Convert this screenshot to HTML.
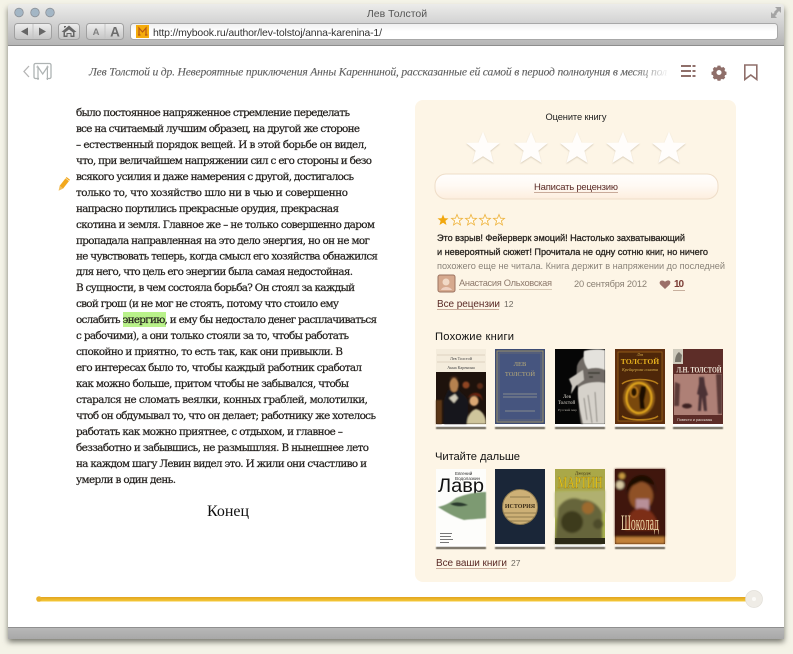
<!DOCTYPE html>
<html lang="ru"><head><meta charset="utf-8"><title>Лев Толстой</title>
<style>
html,body{margin:0;padding:0;background:#f4f3e7;width:793px;height:654px;overflow:hidden}
svg{display:block}
.s{font-family:"Liberation Sans","DejaVu Sans",sans-serif}
.r{font-family:"Liberation Serif","DejaVu Serif",serif}
.b text{font-family:"DejaVu Serif","Liberation Serif",serif;font-size:10.400px;fill:#23201d;stroke:#23201d;stroke-width:.2}
</style></head><body>
<svg xmlns="http://www.w3.org/2000/svg" width="793" height="654" viewBox="0 0 793 654">
<defs>
<linearGradient id="tb" x1="0" y1="0" x2="0" y2="1"><stop offset="0" stop-color="#ececea"/><stop offset=".5" stop-color="#d0d0d0"/><stop offset="1" stop-color="#b4b4b4"/></linearGradient>
<linearGradient id="bb" x1="0" y1="0" x2="0" y2="1"><stop offset="0" stop-color="#b9b9b9"/><stop offset="1" stop-color="#a8a8a8"/></linearGradient>
<linearGradient id="btn" x1="0" y1="0" x2="0" y2="1"><stop offset="0" stop-color="#eeeeee"/><stop offset="1" stop-color="#c4c4c4"/></linearGradient>
<linearGradient id="url" x1="0" y1="0" x2="0" y2="1"><stop offset="0" stop-color="#efefef"/><stop offset=".5" stop-color="#fff"/></linearGradient>
<linearGradient id="wb" x1="0" y1="0" x2="0" y2="1"><stop offset="0" stop-color="#fffefd"/><stop offset=".45" stop-color="#fffaf4"/><stop offset="1" stop-color="#fdeede"/></linearGradient>
<linearGradient id="sl" x1="0" y1="0" x2="0" y2="1"><stop offset="0" stop-color="#e2a31f"/><stop offset="1" stop-color="#f5cb3a"/></linearGradient>
<linearGradient id="fade" x1="0" y1="0" x2="1" y2="0"><stop offset="0" stop-color="#fff" stop-opacity="0"/><stop offset="1" stop-color="#fff"/></linearGradient>
<filter id="sh" x="-5%" y="-5%" width="110%" height="110%"><feGaussianBlur stdDeviation="3"/></filter>
<filter id="bl" x="-10%" y="-10%" width="120%" height="120%"><feGaussianBlur stdDeviation=".5"/></filter>
<filter id="bl2" x="-20%" y="-20%" width="140%" height="140%"><feGaussianBlur stdDeviation="1"/></filter>
<filter id="ss" x="-30%" y="-30%" width="160%" height="160%"><feGaussianBlur stdDeviation=".8"/></filter>
<path id="star" d="M0-16.500 4.600-5.400 17-5.100 7.400 2.700 10.600 15 0 8.200-10.600 15-7.400 2.700-17-5.100-4.600-5.400Z"/>
<path id="st2" d="M0-5.500 1.500-1.800 5.500-1.600 2.400 .9 3.500 5 0 2.700-3.500 5-2.400 .9-5.500-1.600-1.500-1.800Z"/>
</defs>

<!-- window -->
<rect x="8" y="8" width="776" height="634" fill="#77776e" filter="url(#sh)"/>
<rect x="8" y="4" width="776" height="42" rx="3" fill="url(#tb)"/>
<rect x="8" y="45" width="776" height="1" fill="#8d8d8d"/>
<rect x="8" y="46" width="776" height="581" fill="#fff"/>
<rect x="8" y="627" width="776" height="12" fill="url(#bb)"/>
<rect x="8" y="627" width="776" height="1" fill="#8f8f8f"/>

<!-- traffic lights -->
<g stroke="#8c9198" stroke-width=".8"><circle cx="19" cy="12.500" r="4.300" fill="#a3b6c5"/><circle cx="35" cy="12.500" r="4.300" fill="#a3b6c5"/><circle cx="50" cy="12.500" r="4.300" fill="#a3b6c5"/></g>
<text class="s" x="397" y="17" font-size="10.500" fill="#555" text-anchor="middle">Лев Толстой</text>
<!-- resize -->
<g fill="#a4a4a4"><path d="M775 7h6v6l-2-2-3 3-2-2 3-3Z"/><path d="M771 18v-6l2 2 2-2 2 2-2 2 2 2Z"/></g>

<!-- buttons -->
<g stroke="#a0a0a0" fill="url(#btn)"><rect x="14.500" y="23.500" width="37" height="16" rx="3"/><rect x="58.500" y="23.500" width="21" height="16" rx="3"/><rect x="86.500" y="23.500" width="37" height="16" rx="3"/></g>
<path d="M33 24v15M105 24v15" stroke="#c4c4c4"/>
<path d="M21 31.500l7-4v8ZM46 31.500l-7-4v8Z" fill="#666"/>
<path d="M69 25.500l-7.500 6.500h2v5h4v-3h3v3h4v-5h2ZM64 28v-2h2v1Z" fill="#666"/><path d="M65 32.500v3h1.500v-2.500h5v2.500H73v-3l-4-3Z" fill="#ddd"/>
<text class="s" x="96" y="35" font-size="9.500" font-weight="bold" fill="#808080" text-anchor="middle">A</text>
<text class="s" x="115" y="36.500" font-size="13.500" font-weight="bold" fill="#6c6c6c" text-anchor="middle">A</text>
<!-- url -->
<rect x="130.500" y="23.500" width="647" height="16" rx="3" fill="url(#url)" stroke="#a8a8a8"/>
<rect x="136" y="25" width="13" height="13" fill="#f5ac0b"/>
<path d="M139 35v-7l3.500 4 3.500-4v7M138 35h2.500M145 35h2.500" stroke="#b85a14" stroke-width="1.200" fill="none"/>
<text class="s" x="153" y="36" font-size="10.500" fill="#333" textLength="229" lengthAdjust="spacing">http://mybook.ru/author/lev-tolstoj/anna-karenina-1/</text>

<!-- header row -->
<path d="M29 66l-5 5.500 5 5.500" fill="none" stroke="#b5b5b5" stroke-width="1.300"/>
<path d="M39 78.500h-3.500a1.500 1.500 0 0 1-1.500-1.500V65a1.500 1.500 0 0 1 1.500-1.500h14a1.500 1.500 0 0 1 1.500 1.500v12a1.500 1.500 0 0 1-1.500 1.500H46.500" fill="none" stroke="#aeb3b3" stroke-width="1.300"/>
<path d="M38 80v-13l4.700 7 4.700-7v13M36.500 67h2M46.500 67h2" fill="none" stroke="#aeb3b3" stroke-width="1.200"/>
<text class="r" x="89" y="75.500" font-size="11.600" font-style="italic" fill="#5f5f5f" stroke="#5f5f5f" stroke-width=".12" textLength="578" lengthAdjust="spacing">Лев Толстой и др. Невероятные приключения Анны Каренниной, рассказанные ей самой в период полнолуния в месяц пол</text>
<rect x="630" y="62" width="40" height="20" fill="url(#fade)"/>
<g fill="#8f6f6a"><rect x="681" y="65" width="10" height="2"/><rect x="681" y="70" width="10" height="2"/><rect x="681" y="75" width="10" height="2"/><rect x="692.500" y="65" width="3" height="2"/><rect x="692.500" y="70" width="3" height="2"/><rect x="692.500" y="75" width="3" height="2"/></g>
<g transform="translate(719 72.500)"><path fill="#8f6f6a" fill-rule="evenodd" transform="scale(.72)" d="M-2-9.500h4l.5 2 1.700.7 1.800-1 2.700 2.700-1 1.800.7 1.700 2 .5v4.200l-2 .5-.7 1.700 1 1.800-2.700 2.700-1.800-1-1.700.7-.5 2h-4l-.5-2-1.700-.7-1.800 1-2.700-2.700 1-1.800-.7-1.700-2-.5v-4.200l2-.5.700-1.700-1-1.800 2.700-2.700 1.800 1 1.700-.7ZM0-3.500a3.500 3.500 0 1 0 .01 0Z"/></g>
<path d="M744.800 65h12v14.500l-6-4.500-6 4.500Z" fill="none" stroke="#8f6f6a" stroke-width="1.600"/>

<!-- pencil -->
<g transform="translate(63.500 184.500) rotate(38)"><rect x="-2.200" y="-6" width="4.400" height="9.500" fill="#f2a81d"/><rect x="-2.200" y="-7.800" width="4.400" height="1.300" fill="#f2a81d"/><path d="M-2.200 3.500 0 8 2.200 3.500Z" fill="#f2c060"/></g>

<!-- highlight -->
<rect x="123" y="312" width="43" height="15" fill="#b9f28a"/>

<!-- body text -->
<g class="b">
<text x="76" y="116" textLength="274" lengthAdjust="spacing">было постоянное напряженное стремление переделать</text>
<text x="76" y="132" textLength="284" lengthAdjust="spacing">все на считаемый лучшим образец, на другой же стороне</text>
<text x="76" y="148" textLength="291" lengthAdjust="spacing">– естественный порядок вещей. И в этой борьбе он видел,</text>
<text x="76" y="164" textLength="296" lengthAdjust="spacing">что, при величайшем напряжении сил с его стороны и безо</text>
<text x="76" y="180" textLength="278" lengthAdjust="spacing">всякого усилия и даже намерения с другой, достигалось</text>
<text x="76" y="196" textLength="272" lengthAdjust="spacing">только то, что хозяйство шло ни в чью и совершенно</text>
<text x="76" y="212" textLength="263" lengthAdjust="spacing">напрасно портились прекрасные орудия, прекрасная</text>
<text x="76" y="228" textLength="299" lengthAdjust="spacing">скотина и земля. Главное же – не только совершенно даром</text>
<text x="76" y="244" textLength="294" lengthAdjust="spacing">пропадала направленная на это дело энергия, но он не мог</text>
<text x="76" y="259.500" textLength="302" lengthAdjust="spacing">не чувствовать теперь, когда смысл его хозяйства обнажился</text>
<text x="76" y="275" textLength="277" lengthAdjust="spacing">для него, что цель его энергии была самая недостойная.</text>
<text x="76" y="291" textLength="279" lengthAdjust="spacing">В сущности, в чем состояла борьба? Он стоял за каждый</text>
<text x="76" y="307" textLength="263" lengthAdjust="spacing">свой грош (и не мог не стоять, потому что стоило ему</text>
<text x="76" y="323" textLength="301" lengthAdjust="spacing">ослабить энергию, и ему бы недостало денег расплачиваться</text>
<text x="76" y="339" textLength="273" lengthAdjust="spacing">с рабочими), а они только стояли за то, чтобы работать</text>
<text x="76" y="355" textLength="267" lengthAdjust="spacing">спокойно и приятно, то есть так, как они привыкли. В</text>
<text x="76" y="371" textLength="286" lengthAdjust="spacing">его интересах было то, чтобы каждый работник сработал</text>
<text x="76" y="387" textLength="273" lengthAdjust="spacing">как можно больше, притом чтобы не забывался, чтобы</text>
<text x="76" y="403" textLength="292" lengthAdjust="spacing">старался не сломать веялки, конных граблей, молотилки,</text>
<text x="76" y="419" textLength="300" lengthAdjust="spacing">чтоб он обдумывал то, что он делает; работнику же хотелось</text>
<text x="76" y="435" textLength="267" lengthAdjust="spacing">работать как можно приятнее, с отдыхом, и главное –</text>
<text x="76" y="451" textLength="293" lengthAdjust="spacing">беззаботно и забывшись, не размышляя. В нынешнее лето</text>
<text x="76" y="467" textLength="291" lengthAdjust="spacing">на каждом шагу Левин видел это. И жили они счастливо и</text>
<text x="76" y="483" textLength="100" lengthAdjust="spacing">умерли в один день.</text>
</g>
<text class="r" x="228" y="516" font-size="16" fill="#111" text-anchor="middle">Конец</text>

<!-- panel -->
<rect x="415" y="100" width="321" height="482" rx="8" fill="#fdf5e6"/>
<text class="s" x="576" y="120" font-size="9.300" fill="#222" text-anchor="middle" textLength="61" lengthAdjust="spacing">Оцените книгу</text>
<g fill="#d9cdb9" filter="url(#ss)" transform="translate(0 1)"><use href="#star" x="483" y="148"/><use href="#star" x="531" y="148"/><use href="#star" x="577" y="148"/><use href="#star" x="623" y="148"/><use href="#star" x="669" y="148"/></g>
<g fill="#fffdfb"><use href="#star" x="483" y="148"/><use href="#star" x="531" y="148"/><use href="#star" x="577" y="148"/><use href="#star" x="623" y="148"/><use href="#star" x="669" y="148"/></g>
<rect x="435" y="174" width="283" height="25" rx="11" fill="url(#wb)" stroke="#eeddc8"/>
<text class="s" x="576" y="190" font-size="9.500" fill="#5a2a26" text-anchor="middle" textLength="84" lengthAdjust="spacing">Написать рецензию</text>
<path d="M534 192.500h84" stroke="#c9ab9a"/>

<!-- small rating -->
<use href="#st2" x="443" y="220" fill="#f1a70e"/>
<g fill="#fff9ec" stroke="#eeb23a" stroke-width=".8"><use href="#st2" x="457" y="220"/><use href="#st2" x="471" y="220"/><use href="#st2" x="485" y="220"/><use href="#st2" x="499" y="220"/></g>
<g class="s" fill="#1b1b1b">
<text x="437" y="241" font-size="9.200" stroke="#2a2622" stroke-width=".3" textLength="248" lengthAdjust="spacing" fill="#2a2622">Это взрыв! Фейерверк эмоций! Настолько захватывающий</text>
<text x="437" y="255" font-size="9.200" stroke="#2a2622" stroke-width=".3" textLength="271" lengthAdjust="spacing" fill="#2a2622">и невероятный сюжет! Прочитала не одну сотню книг, но ничего</text>
<text x="437" y="269" font-size="9.200" textLength="288" lengthAdjust="spacing" fill="#8b847a">похожего еще не читала. Книга держит в напряжении до последней</text>
</g>
<!-- review meta -->
<rect x="438" y="275" width="17" height="17" rx="2" fill="#d6a98e" stroke="#9c7260"/>
<circle cx="446" cy="282" r="3.500" fill="#f1d9c6"/><path d="M441 290c1-4 9-4 11 0Z" fill="#eed0c0"/>
<text class="s" x="459" y="286" font-size="9.300" fill="#8e7a6c" textLength="93" lengthAdjust="spacing">Анастасия Ольховская</text>
<path d="M459 289.500h93" stroke="#d6c8b4"/>
<text class="s" x="574" y="287" font-size="9.300" fill="#8a8074" textLength="73" lengthAdjust="spacing">20 сентября 2012</text>
<path d="M665 289l-4.500-4.300c-2.500-2.500.8-6 4.500-3 3.700-3 7-.5 4.500 3Z" fill="#9b6f68"/>
<text class="s" x="674" y="287" font-size="10" font-weight="bold" fill="#7a3b34" textLength="10" lengthAdjust="spacing">10</text>
<path d="M673 290.500h12" stroke="#c8b09e"/>
<text class="s" x="437" y="307" font-size="10" fill="#5a2a26" textLength="63" lengthAdjust="spacing">Все рецензии</text>
<path d="M437 309.500h62" stroke="#c9ab9a"/>
<text class="s" x="504" y="307" font-size="8.500" fill="#6f6a62">12</text>

<!-- similar books -->
<text class="s" x="435" y="340" font-size="11.200" fill="#111" textLength="79" lengthAdjust="spacing">Похожие книги</text>

<!-- shadows under books -->
<g><g fill="#fff"><rect x="436" y="424" width="50" height="3"/><rect x="495" y="424" width="50" height="3"/><rect x="555" y="424" width="50" height="3"/><rect x="615" y="424" width="50" height="3"/><rect x="673" y="424" width="50" height="3"/><rect x="436" y="544" width="50" height="3"/><rect x="495" y="544" width="50" height="3"/><rect x="555" y="544" width="50" height="3"/><rect x="615" y="544" width="50" height="3"/></g>
<g fill="#5f5a50" filter="url(#bl)"><rect x="436" y="427" width="50" height="2"/><rect x="495" y="427" width="50" height="2"/><rect x="555" y="427" width="50" height="2"/><rect x="615" y="427" width="50" height="2"/><rect x="673" y="427" width="50" height="2"/>
<rect x="436" y="547" width="50" height="2"/><rect x="495" y="547" width="50" height="2"/><rect x="555" y="547" width="50" height="2"/><rect x="615" y="547" width="50" height="2"/></g></g>

<!-- book 1 -->
<g>
<rect x="436" y="349" width="50" height="75" fill="#f4ecdc"/>
<path d="M437 355h48M437 362h48" stroke="#c8b8a2" stroke-width=".6"/>
<text class="r" x="461" y="360" font-size="4.200" text-anchor="middle" fill="#444">Лев Толстой</text>
<text class="r" x="461" y="369" font-size="4.200" text-anchor="middle" fill="#444">Анна Каренина</text>
<rect x="436" y="372" width="50" height="52" fill="#1e120c"/>
<g filter="url(#ss)">
<path d="M448 390l5-1 6 1c2 4 8 6 9 12v22h-24v-23c1-5 3-8 4-11Z" fill="#14141c"/>
<ellipse cx="454" cy="385" rx="4.500" ry="7" fill="#b5814f"/>
<path d="M449 379c2-4 8-4 10 0l-2-1h-6Z" fill="#3c2412"/>
<path d="M449 398l6-4 3 4-4 5Z" fill="#d2ccba"/>
<ellipse cx="474" cy="401" rx="4.500" ry="5" fill="#dba773"/>
<path d="M468 398c2-5 9-7 13-3l2 6-3-4-7-2Z" fill="#6c2410"/>
<path d="M467 424c0-9 5-14 9-15 5 1 10 6 10 15Z" fill="#cfc59c"/>
<circle cx="466" cy="385" r="3.500" fill="#8f4524"/><circle cx="480" cy="386" r="3" fill="#5c2c18"/><rect x="436" y="400" width="6" height="24" fill="#5a3518"/>
</g></g>

<!-- book 2 -->
<g><rect x="495" y="349" width="50" height="75" fill="#3d4b74"/>
<rect x="497" y="351" width="46" height="71" fill="#46557f" stroke="#a09468" stroke-width="1"/>
<rect x="499" y="353" width="42" height="67" fill="none" stroke="#7c7c70" stroke-width=".5"/>
<text class="r" x="520" y="366" font-size="6.500" text-anchor="middle" fill="#b9ab78">ЛЕВ</text>
<text class="r" x="520" y="376" font-size="6.500" text-anchor="middle" fill="#b9ab78">ТОЛСТОЙ</text>
<path d="M503 394h34M503 397h34M505 411h30" stroke="#9a9c92" stroke-width=".8"/>
</g>

<!-- book 3 -->
<g><rect x="555" y="349" width="50" height="75" fill="#060606"/>
<g filter="url(#bl)">
<path d="M577 366c3-9 12-15 28-16v74h-24c-2-12-3-20-1-30-3-6-4-18-3-28Z" fill="#6f6b65"/>
<path d="M584 351c7-2 15-2 21-1v20c-4-2-10-3-17-1-4-5-5-12-4-18Z" fill="#e4e2dd"/>
<path d="M578 388c6-6 20-7 27-5v41h-22c-2-12-6-22-5-36Z" fill="#d6d2cb"/>
<path d="M588 395l4 28M595 392l2 30M584 398l3 22" stroke="#8e8a83" stroke-width="1"/>
<path d="M569 379l14-9 1 10-8 6-5 8 1-8Z" fill="#c9c5bd"/>
<path d="M588 373h12M589 377h4" stroke="#3c3a36" stroke-width="1.400"/>
</g>
<text class="r" x="563" y="398" font-size="5" fill="#d8d4cc">Лев</text>
<text class="r" x="558" y="404" font-size="5" fill="#d8d4cc">Толстой</text>
<text class="r" x="558" y="411" font-size="3.500" fill="#a8a49c">Русский мир</text>
</g>

<!-- book 4 -->
<g><rect x="615" y="349" width="50" height="75" fill="#5f2f0e"/>
<path d="M618 352h44v69h-44Z" fill="#4e2709" stroke="#a26a1b" stroke-width=".7"/>
<text class="r" x="640" y="356" font-size="4" font-style="italic" text-anchor="middle" fill="#d9b14c">Лев</text>
<text class="r" x="640" y="364" font-size="7.600" font-weight="bold" text-anchor="middle" fill="#e6b01e">ТОЛСТОЙ</text>
<text class="r" x="640" y="371" font-size="4.300" font-style="italic" text-anchor="middle" fill="#d9b14c">Крейцерова соната</text>
<path d="M622 384c6-6 30-6 36 0M622 416c6 5 30 5 36 0" fill="none" stroke="#b87f1b" stroke-width="1.500"/>
<g filter="url(#ss)"><ellipse cx="639" cy="398" rx="16" ry="18" fill="#8d5c15"/><ellipse cx="639" cy="398" rx="12.500" ry="15" fill="#7a4a10" stroke="#e8ab1f" stroke-width="1.800"/>
<ellipse cx="634" cy="392" rx="3.500" ry="5" fill="#2c1805" stroke="#d68c1e"/><path d="M641 386h5v5l-2 10 1 8h-5l-1-13Z" fill="#1b1006"/></g>
</g>

<!-- book 5 -->
<g><rect x="673" y="349" width="50" height="75" fill="#5d2d28"/>
<rect x="673" y="349" width="10" height="15" fill="#cfcabc"/>
<path d="M675 362c0-4 1-8 4-10l3 3-1 7Z" fill="#78746a"/>
<text class="r" x="676.500" y="372.500" font-size="8" fill="#f3eadc" font-weight="bold" textLength="45" lengthAdjust="spacingAndGlyphs">Л.Н. ТОЛСТОЙ</text>
<rect x="674" y="374" width="48" height="41" fill="#ae8076"/>
<g filter="url(#ss)"><path d="M699 377h5l1 8 3 10-2 1 1 15h-3l-2-14-1 14h-3l1-16-2-1 2-10Z" fill="#4c3134"/>
<path d="M716 374h6v40h-4ZM675 382l5 2-1 22h-5Z" fill="#5b3a38"/><ellipse cx="687" cy="406" rx="5" ry="2.500" fill="#3c2323"/></g>
<text class="s" x="677" y="421" font-size="3.800" fill="#e7ddd4">Повести и рассказы</text>
</g>

<!-- next -->
<text class="s" x="435" y="460" font-size="11.200" fill="#111" textLength="85" lengthAdjust="spacing">Читайте дальше</text>

<!-- book 6 -->
<g><rect x="436" y="469" width="50" height="75" fill="#fdfdfb"/>
<text class="s" x="455" y="475" font-size="4.600" fill="#333">Евгений</text>
<text class="s" x="455" y="480" font-size="4.600" fill="#333">Водолазкин</text>
<text class="s" x="438" y="492" font-size="19.500" fill="#111" textLength="46" lengthAdjust="spacingAndGlyphs">Лавр</text>
<g filter="url(#bl)"><path d="M438 507c8-2 12-4 18-9 10-4 20-6 30-6v26c-6 1-14 1-22 2-10-3-18-8-26-13Z" fill="#7d9a72"/><path d="M450 504c6-3 12-2 18 1-6 2-12 2-18-1Z" fill="#2b3a2d"/></g>
<g fill="#777"><rect x="440" y="533" width="12" height="1"/><rect x="440" y="536" width="11" height="1"/><rect x="440" y="539" width="13" height="1"/><rect x="440" y="542" width="9" height="1"/></g>
</g>

<!-- book 7 -->
<g><rect x="495" y="469" width="50" height="75" fill="#1a2638"/>
<circle cx="520" cy="507" r="17.500" fill="#cdb076" stroke="#8d7a4f"/>
<text class="r" x="520" y="508" font-size="6" font-weight="bold" text-anchor="middle" fill="#3a2c18">ИСТОРИЯ</text>
<path d="M510 497h20M504 513h32M506 517h28M509 521h22" stroke="#7e6a42" stroke-width=".8"/>
</g>

<!-- book 8 -->
<g><rect x="555" y="469" width="50" height="75" fill="#a8b04e"/>
<rect x="555" y="469" width="50" height="22" fill="#aaa848"/>
<g filter="url(#bl2)"><path d="M555 492c14-2 30 0 50-2v22c-14 6-36 0-50 6Z" fill="#b0b070"/>
<path d="M558 508c6-10 16-12 24-8 8-1 16 4 20 12v32h-47Z" fill="#66653a"/><ellipse cx="572" cy="522" rx="11" ry="11" fill="#3c3a1f"/><circle cx="588" cy="508" r="6" fill="#9d6a2d"/><circle cx="598" cy="524" r="5" fill="#4d4c2a"/></g>
<text class="r" x="575" y="474.500" font-size="4.500" fill="#3a2c10">Джордж</text>
<text class="r" x="557.500" y="488" font-size="17" fill="#f5d316" stroke="#6d4a10" stroke-width=".25" textLength="45" lengthAdjust="spacingAndGlyphs">МАРТИН</text>
<rect x="555" y="538" width="50" height="6" fill="#2c2a16"/>
</g>

<!-- book 9 -->
<g><rect x="615" y="469" width="50" height="75" fill="#331206"/>
<g filter="url(#bl2)"><path d="M615 469h50v75h-50Z" fill="#3f170a"/>
<ellipse cx="641" cy="496" rx="12" ry="14" fill="#8f5128"/><path d="M626 494c1-14 9-19 16-19 9 0 14 8 14 18l-2-8-12-4-12 6Z" fill="#1c0b05"/>
<rect x="636" y="499" width="13" height="12" fill="#b89098"/><path d="M625 530c1-14 8-22 16-22 9 0 16 8 18 22Z" fill="#7c2d14"/><circle cx="620" cy="485" r="4" fill="#d7c9a2"/><circle cx="622" cy="476" r="3" fill="#c99b43"/><path d="M615 537h50v7h-50Z" fill="#c2823a"/></g>
<text class="r" x="621" y="530" font-size="22" fill="#edd9aa" textLength="38" lengthAdjust="spacingAndGlyphs">Шоколад</text>
</g>

<text class="s" x="436" y="566" font-size="10" fill="#5a2a26" textLength="71" lengthAdjust="spacing">Все ваши книги</text>
<path d="M436 568.500h71" stroke="#c9ab9a"/>
<text class="s" x="511" y="566" font-size="8.500" fill="#6f6a62">27</text>

<!-- slider -->
<rect x="37" y="597" width="712" height="4.500" fill="url(#sl)"/>
<circle cx="39" cy="599" r="2.800" fill="#eab22a"/>
<circle cx="754" cy="599" r="8.500" fill="#efece6" stroke="#e2dfd8" stroke-width=".7"/>
<circle cx="754" cy="599" r="2" fill="#fbfaf7"/>
</svg>
</body></html>
